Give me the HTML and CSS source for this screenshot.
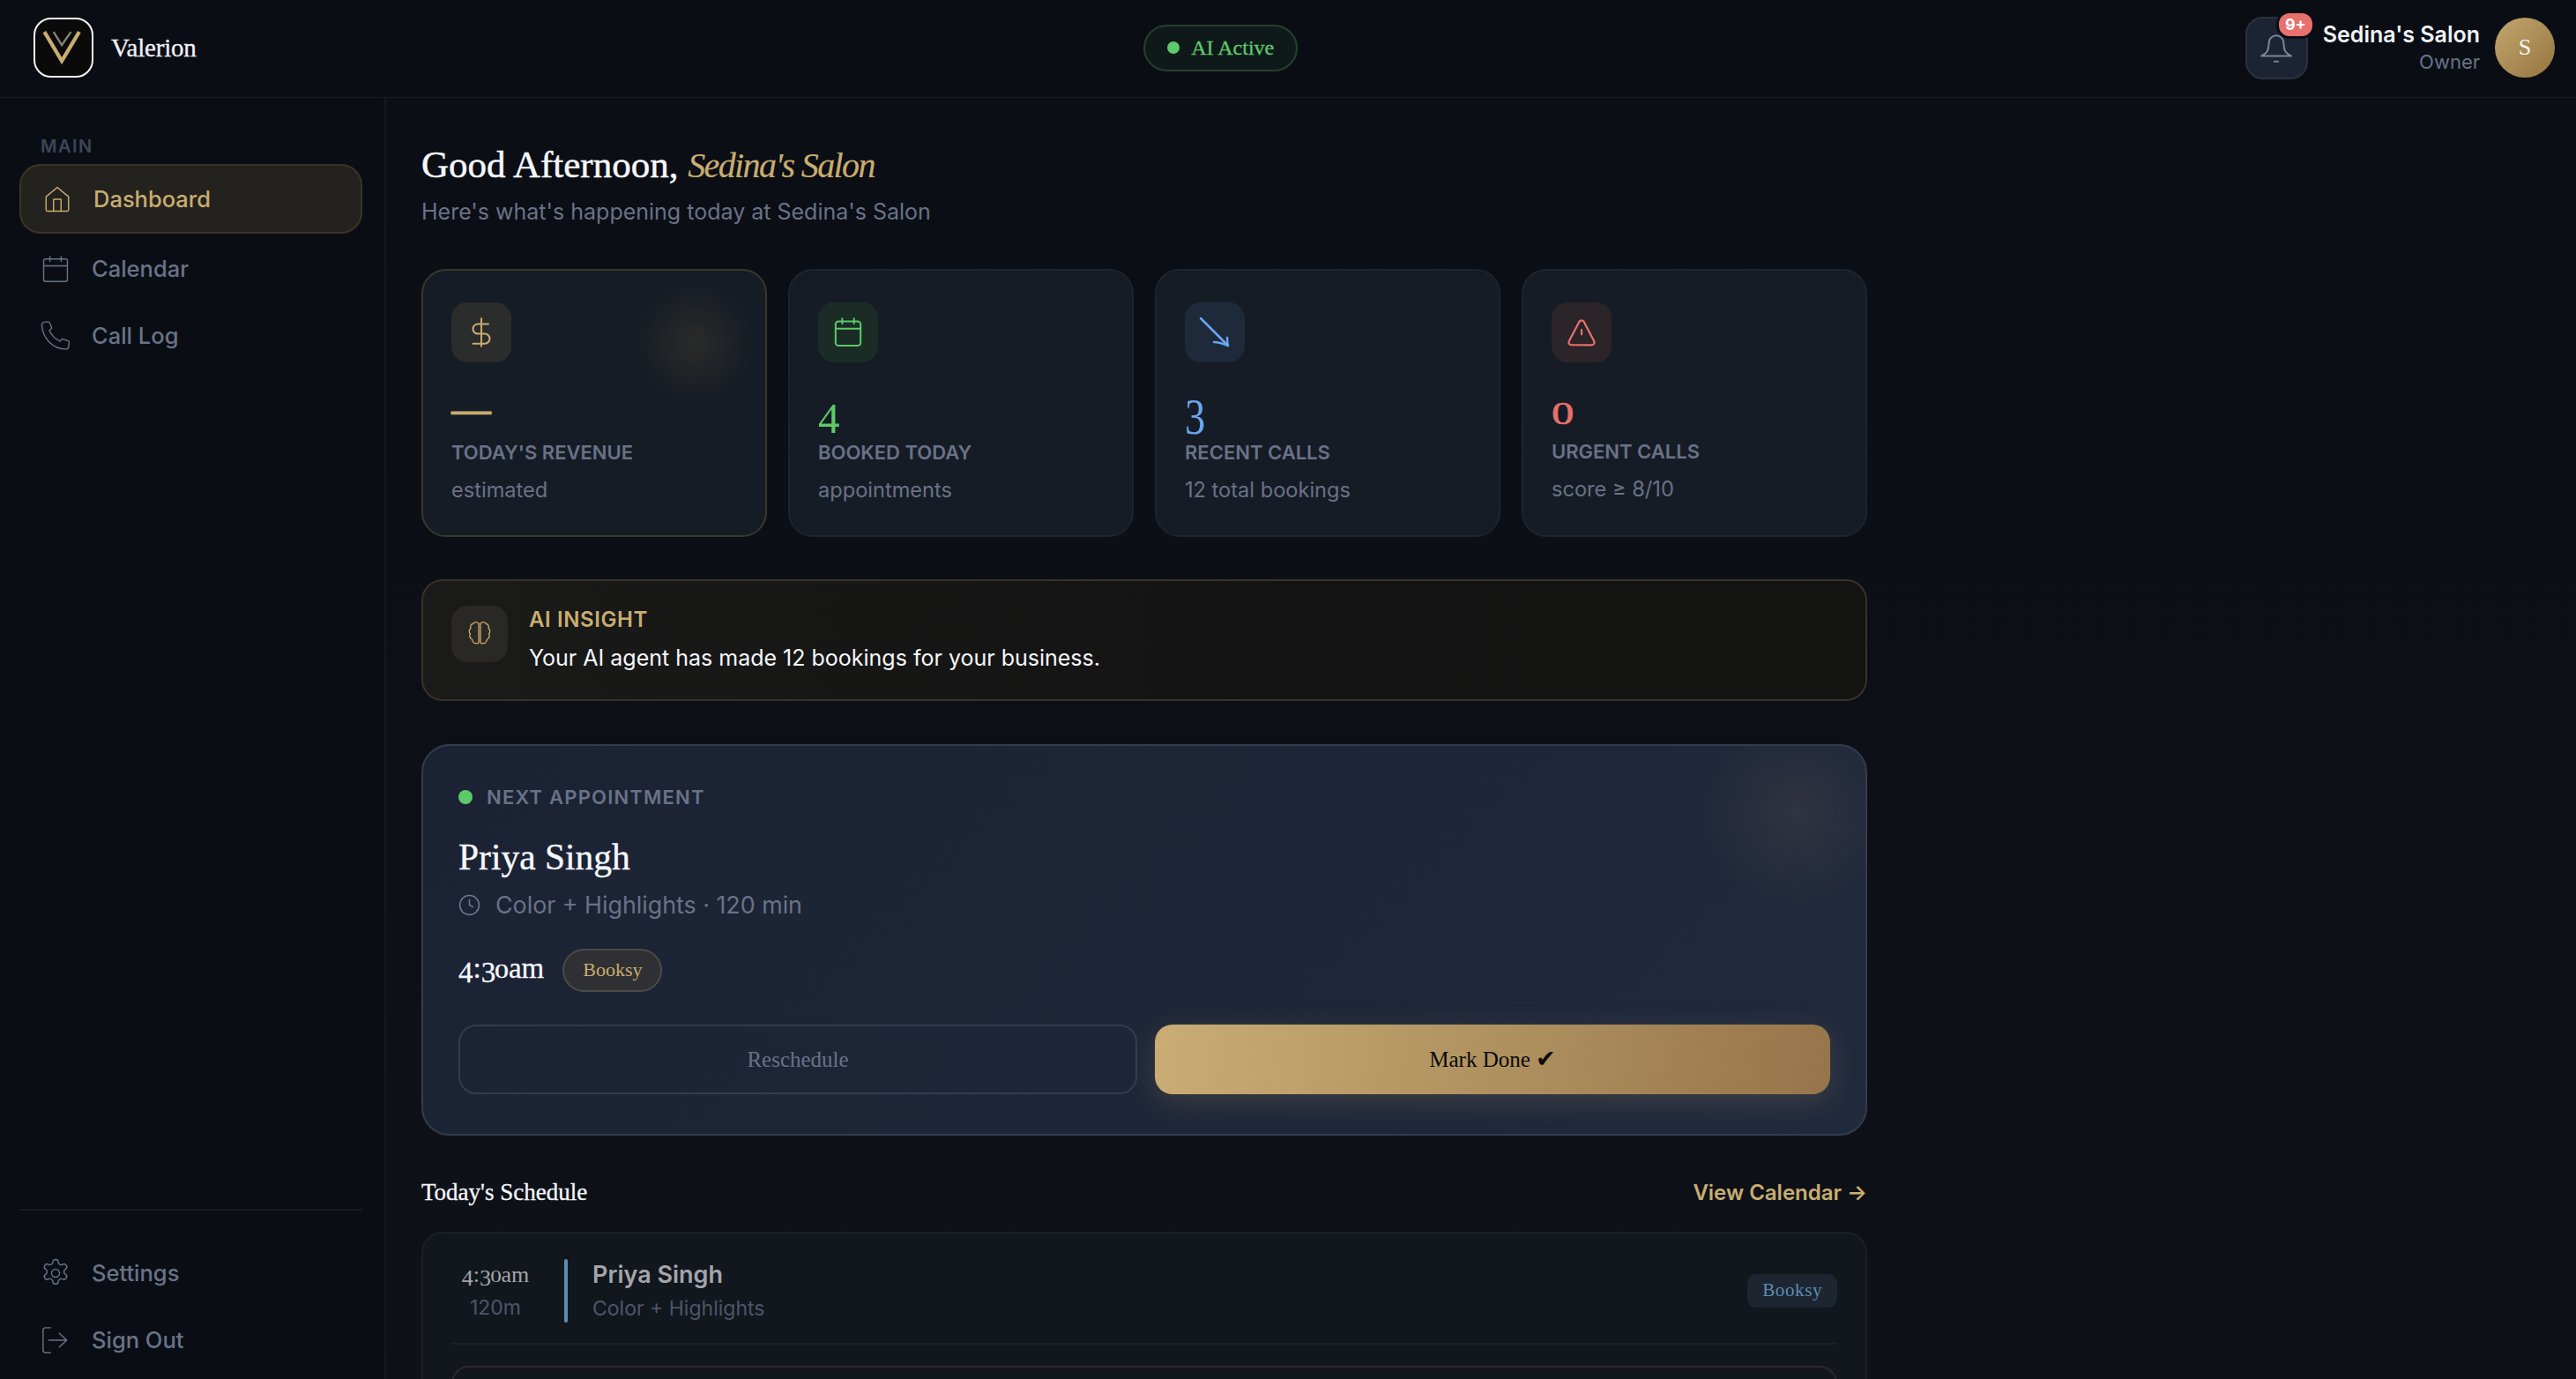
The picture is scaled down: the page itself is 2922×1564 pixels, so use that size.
FILE: index.html
```html
<!DOCTYPE html>
<html lang="en">
<head>
<meta charset="utf-8">
<title>Valerion</title>
<link rel="stylesheet" href="styles.css">
</head>
<body>
<div class="app">
  <header class="topbar">
    <div class="brand">
      <div class="logo">
        <svg viewBox="0 0 68 68" width="64" height="64"><path d="M22 15 L32 31 L43 15" fill="none" stroke="#85837c" stroke-width="2.5"/><path d="M11 15 L32 50 L53 15" fill="none" stroke="#c9ad70" stroke-width="4.5"/></svg>
      </div>
      <span class="brand-name">Valerion</span>
    </div>
    <div class="ai-pill"><span class="ai-dot"></span>AI Active</div>
    <div class="account">
      <div class="bell">
        <svg viewBox="0 0 36 36" width="38" height="38" fill="none" stroke="#7a849c" stroke-width="1.900" stroke-linecap="round" stroke-linejoin="round"><path d="M10 14c0-12 16-12 16 0 0 7 2 10 8 13H2c6-3 8-6 8-13z"/><path d="M16 33h4"/></svg>
        <span class="badge">9+</span>
      </div>
      <div class="who">
        <div class="who-name">Sedina's Salon</div>
        <div class="who-role">Owner</div>
      </div>
      <div class="avatar">S</div>
    </div>
  </header>
  <div class="shell">
    <aside class="sidebar">
      <div class="side-label">MAIN</div>
      <nav class="side-nav">
        <a class="nav-item active">
          <svg class="nav-ico" viewBox="0 0 24 24" fill="none" stroke="currentColor" stroke-linecap="round" stroke-linejoin="round"><path d="M3 10 12 2.500 21 10v10.500a1 1 0 0 1-1 1H4a1 1 0 0 1-1-1z"/><path d="M9 21.500V12h6v9.500"/></svg>
          Dashboard
        </a>
        <a class="nav-item">
          <svg class="nav-ico" viewBox="0 0 24 24" fill="none" stroke="currentColor" stroke-linecap="round" stroke-linejoin="round"><rect x="2.500" y="4" width="19" height="18" rx="1.500"/><path d="M7.500 2v4M16.500 2v4M2.500 9.500h19"/></svg>
          Calendar
        </a>
        <a class="nav-item">
          <svg class="nav-ico" viewBox="0 0 24 24" fill="none" stroke="currentColor" stroke-linecap="round" stroke-linejoin="round"><path d="M1 3c0-1 .8-1.800 2-2l3-.4c.6 0 1 .3 1.200.8L8.800 5c.2.500 0 1-.4 1.400L7 7.600c1.800 4 4.500 6.800 8.500 8.600l1.200-1.300c.4-.4.900-.6 1.400-.4l4 1.500c.6.200.9.700.8 1.300l-.4 3.200c-.2 1.200-1 2-2.200 2C10 22.500 1.500 14 1 3z"/></svg>
          Call Log
        </a>
      </nav>
      <div class="side-foot">
        <a class="nav-item">
          <svg class="nav-ico" viewBox="0 0 24 24" fill="none" stroke="currentColor" stroke-linecap="round" stroke-linejoin="round"><circle cx="12" cy="12" r="3.200"/><path d="M12.200 1h-.4a2 2 0 0 0-2 2v.2a2 2 0 0 1-1 1.700l-.4.200a2 2 0 0 1-2 0l-.2-.1a2 2 0 0 0-2.700.7l-.2.400a2 2 0 0 0 .7 2.700l.2.100a2 2 0 0 1 1 1.700v.5a2 2 0 0 1-1 1.700l-.2.100a2 2 0 0 0-.7 2.700l.2.400a2 2 0 0 0 2.700.7l.2-.1a2 2 0 0 1 2 0l.4.200a2 2 0 0 1 1 1.700v.2a2 2 0 0 0 2 2h.4a2 2 0 0 0 2-2v-.2a2 2 0 0 1 1-1.700l.4-.2a2 2 0 0 1 2 0l.2.100a2 2 0 0 0 2.700-.7l.2-.4a2 2 0 0 0-.7-2.700l-.2-.1a2 2 0 0 1-1-1.700v-.5a2 2 0 0 1 1-1.700l.2-.1a2 2 0 0 0 .7-2.700l-.2-.4a2 2 0 0 0-2.700-.7l-.2.100a2 2 0 0 1-2 0l-.4-.2a2 2 0 0 1-1-1.700V3a2 2 0 0 0-2-2z"/></svg>
          Settings
        </a>
        <a class="nav-item">
          <svg class="nav-ico" viewBox="0 0 24 24" fill="none" stroke="currentColor" stroke-linecap="round" stroke-linejoin="round"><path d="M8 22H4a2 2 0 0 1-2-2V4a2 2 0 0 1 2-2h4"/><path d="M15 6.500 21 12l-6 5.500M21 12H6.500"/></svg>
          Sign Out
        </a>
      </div>
    </aside>
    <main class="main">
      <div class="content">
        <h1 class="greet">Good Afternoon, <em>Sedina's Salon</em></h1>
        <p class="greet-sub">Here's what's happening today at Sedina's Salon</p>

        <section class="stats">
          <article class="stat stat-gold">
            <div class="stat-ico ico-gold"><svg viewBox="0 0 24 24" width="38" height="38" fill="none" stroke="currentColor" stroke-width="1.300" stroke-linecap="round" stroke-linejoin="round"><path d="M12 2v20M17 6H9.500a3.500 3.500 0 0 0 0 7h5a3.500 3.500 0 0 1 0 7H6"/></svg></div>
            <div class="stat-value val-gold"><span class="dash">—</span></div>
            <div class="stat-label">TODAY'S REVENUE</div>
            <div class="stat-sub">estimated</div>
          </article>
          <article class="stat">
            <div class="stat-ico ico-green"><svg viewBox="0 0 24 24" width="40" height="40" fill="none" stroke="currentColor" stroke-width="1.200" stroke-linecap="round" stroke-linejoin="round"><rect x="3.500" y="4.500" width="17" height="16.500" rx="2"/><path d="M8 2.500v3.500M16 2.500v3.500M3.500 9.500h17"/></svg></div>
            <div class="stat-value val-green"><span class="num">4</span></div>
            <div class="stat-label">BOOKED TODAY</div>
            <div class="stat-sub">appointments</div>
          </article>
          <article class="stat">
            <div class="stat-ico ico-blue"><svg viewBox="0 0 36 36" width="36" height="36" fill="none" stroke="currentColor" stroke-width="2.500" stroke-linecap="round" stroke-linejoin="round"><path d="M2 2 33 33"/><path d="M17 29c6 0 11 2 16 4 -1-3-1-6-1-9"/></svg></div>
            <div class="stat-value val-blue"><span class="num-three">3</span></div>
            <div class="stat-label">RECENT CALLS</div>
            <div class="stat-sub">12 total bookings</div>
          </article>
          <article class="stat">
            <div class="stat-ico ico-red"><svg viewBox="0 0 24 24" width="36" height="36" fill="none" stroke="currentColor" stroke-width="1.500" stroke-linecap="round" stroke-linejoin="round"><path d="M10.300 3.800 2.600 18.500a2 2 0 0 0 1.700 3h15.400a2 2 0 0 0 1.700-3L13.700 3.800a2 2 0 0 0-3.400 0z"/><path d="M12 10v3.500"/></svg></div>
            <div class="stat-value val-red"><span class="zero">0</span></div>
            <div class="stat-label">URGENT CALLS</div>
            <div class="stat-sub">score ≥ 8/10</div>
          </article>
        </section>

        <section class="insight">
          <div class="insight-ico"><svg viewBox="0 0 32 32" width="32" height="32" fill="none" stroke="#c9ad70" stroke-width="1.300" stroke-linecap="round" stroke-linejoin="round"><path d="M15 4C13 2 9.500 2 8.500 4.500 6 5 5 7.500 6 9.500 4 11 3.500 14 5.500 16 4 18.500 5 21 7.500 22 7.500 25 10.500 27.500 13 26.500 14 27 15 26.500 15 25Z"/><path d="M17 4C19 2 22.500 2 23.500 4.500 26 5 27 7.500 26 9.500 28 11 28.500 14 26.500 16 28 18.500 27 21 24.500 22 24.500 25 21.500 27.500 19 26.500 18 27 17 26.500 17 25Z"/></svg></div>
          <div class="insight-body">
            <div class="insight-title">AI INSIGHT</div>
            <div class="insight-text">Your AI agent has made 12 bookings for your business.</div>
          </div>
        </section>

        <section class="next">
          <div class="next-head"><span class="next-dot"></span>NEXT APPOINTMENT</div>
          <div class="next-name">Priya Singh</div>
          <div class="next-service">
            <svg viewBox="0 0 24 24" width="25" height="25" fill="none" stroke="#6f7890" stroke-width="1.500" stroke-linecap="round" stroke-linejoin="round"><circle cx="12" cy="12" r="10.500"/><path d="M12 6v6l4 2"/></svg>
            Color + Highlights · 120 min
          </div>
          <div class="next-time">
            <span class="time-big"><span class="d-low">4</span>:<span class="d-low">3</span><span class="d-x">0</span>am</span>
            <span class="source-pill">Booksy</span>
          </div>
          <div class="next-actions">
            <button class="btn btn-ghost">Reschedule</button>
            <button class="btn btn-gold">Mark Done <span class="tick">✔</span></button>
          </div>
        </section>

        <div class="sched-head">
          <h2 class="sched-title">Today's Schedule</h2>
          <a class="sched-link">View Calendar →</a>
        </div>
        <section class="sched">
          <div class="row">
            <div class="row-time">
              <div class="row-clock"><span class="d-low">4</span>:<span class="d-low">3</span><span class="d-x">0</span>am</div>
              <div class="row-dur">120m</div>
            </div>
            <div class="row-bar"></div>
            <div class="row-main">
              <div class="row-name">Priya Singh</div>
              <div class="row-svc">Color + Highlights</div>
            </div>
            <span class="row-tag">Booksy</span>
          </div>
          <div class="row-next"></div>
        </section>
      </div>
    </main>
  </div>
</div>
</body>
</html>
```

FILE: styles.css
```css
* { box-sizing: border-box; }
html, body { margin: 0; height: 100%; overflow: hidden; background: #0a0e14; }
body { font-family: "Inter", "Liberation Sans", sans-serif; color: #f0f2f8; }
h1, h2, p { margin: 0; }
svg { display: block; flex: none; }

.app { height: 100vh; display: flex; flex-direction: column; }

.topbar {
  height: 111px; flex: none; display: flex; justify-content: space-between;
  align-items: center; padding: 0 24px 2px 38px; background: #0a0e14;
  border-bottom: 1px solid #181b21;
}
.brand { display: flex; align-items: center; gap: 20px; }
.logo {
  width: 68px; height: 68px; border-radius: 20px; background: #0a0a0a; border: 2px solid #f4f4f2;
  display: flex; align-items: center; justify-content: center;
}
.brand-name { font-family: "Liberation Serif", serif; font-size: 29px; letter-spacing: -0.2px; color: #f0f2f8; -webkit-text-stroke: .3px #f0f2f8; }
.ai-pill {
  display: flex; align-items: center; gap: 13px; height: 53px; padding: 0 25px;
  border-radius: 27px; border: 2px solid #25402c; background: #10191a;
  font-family: "Liberation Serif", serif; font-size: 24px; color: #5cc96a; -webkit-text-stroke: .3px #5cc96a;
}
.ai-dot { width: 14px; height: 14px; border-radius: 50%; background: #5cc96a; }
.account { display: flex; align-items: center; justify-content: flex-end; }
.bell {
  width: 71px; height: 71px; border-radius: 20px; background: #1c2333; border: 2px solid #2b3140;
  display: flex; align-items: center; justify-content: center; position: relative;
}
.badge {
  position: absolute; top: -9px; right: -10px; height: 26px; padding: 0 7px; border-radius: 15px;
  background: #e8706c; border: 3px solid #0a0e14; box-sizing: content-box;
  font-size: 18px; font-weight: 700; line-height: 26px; color: #fff;
}
.who { margin-left: 17px; text-align: right; margin-top: -1px; }
.who-name { font-size: 25px; font-weight: 600; line-height: 30px; color: #f0f2f8; }
.who-role { font-size: 22px; line-height: 28px; color: #6a7287; margin-top: 2px; }
.avatar {
  width: 68px; height: 68px; margin-left: 17px; border-radius: 50%;
  background: linear-gradient(135deg, #c2a76f, #96743f);
  display: flex; align-items: center; justify-content: center;
  font-family: "Liberation Serif", serif; font-size: 26px; color: #f8f6f0;
}

.shell { flex: 1; min-height: 0; display: flex; }
.sidebar {
  width: 438px; flex: none; display: flex; flex-direction: column; padding: 43px 25px 0 22px;
  background: #0a0e14; border-right: 2px solid #15181f;
}
.side-label { padding-left: 24px; font-size: 20px; font-weight: 600; letter-spacing: 1.500px; line-height: 24px; color: #3f4558; margin-bottom: 8px; }
.side-nav { display: flex; flex-direction: column; gap: 3px; }
.nav-item {
  display: flex; align-items: center; gap: 24px; height: 73px; padding: 0 24px;
  font-size: 25.500px; font-weight: 500; color: #6a7287; border-radius: 24px;
}
.nav-item.active {
  height: 79px; color: #c9ad70; background: #24221f; border: 2px solid #3a3428;
}
.nav-ico { width: 34px; height: 34px; stroke-width: 1; }
.side-foot { margin-top: auto; border-top: 2px solid #181b21; padding: 34px 0 8px; display: flex; flex-direction: column; gap: 3px; }

.main { flex: 1; min-width: 0; padding: 0 40px; background: linear-gradient(180deg, #0b0e15, #0e1218); overflow: hidden; }
.content { width: 1640px; padding-top: 53px; }
.greet { font-family: "Liberation Serif", serif; font-size: 43px; font-weight: 400; line-height: 46px; color: #f6f7fb; -webkit-text-stroke: .5px #f6f7fb; }
.greet em { color: #c9ad70; font-size: 40px; letter-spacing: -1.600px; -webkit-text-stroke: .2px #c9ad70; }
.greet-sub { margin-top: 12px; font-size: 25px; line-height: 34px; color: #6a7287; }

.stats { display: grid; grid-template-columns: repeat(4, 392px); gap: 24px; margin-top: 48px; }
.stat {
  height: 304px; padding: 36px 32px 0; border-radius: 28px; background: #161c25; border: 2px solid #1e242e;
  position: relative; overflow: hidden;
}
.stat-gold { border-color: #3a372f; background: radial-gradient(circle 68px at 308px 82px, #2a2b2a, rgba(40,42,42,0) 100%), #161c25; }
.stat-ico { width: 68px; height: 68px; border-radius: 18px; display: flex; align-items: center; justify-content: center; }
.ico-gold { background: #2b2c2c; color: #c9ad70; }
.ico-green { background: #1b2c27; color: #5cc96a; }
.ico-blue { background: #1e2939; color: #69a5f2; }
.ico-red { background: #2b2429; color: #e8706c; }
.stat-value { height: 49px; margin-top: 39px; font-family: "Liberation Serif", serif; font-size: 49px; line-height: 49px; }
.val-gold { color: #c9ad70; }
.val-green { color: #5cc96a; }
.val-blue { color: #69a5f2; }
.val-red { color: #e8706c; }
.dash { display: block; font-size: 45px; font-weight: 700; line-height: 29px; -webkit-text-stroke: .6px #c9ad70; }
.num-three { display: block; width: fit-content; margin-top: 4px; font-size: 58px; line-height: 45px; transform: scaleX(.8); transform-origin: 0 0; }
.zero { display: block; width: fit-content; margin-top: -1px; font-size: 35px; line-height: 42px; transform: scaleX(1.450); transform-origin: 0 0; -webkit-text-stroke: .6px #e8706c; }
.stat-label { font-size: 22px; font-weight: 600; line-height: 28px; color: #6a7287; }
.stat-sub { margin-top: 14px; font-size: 23.600px; line-height: 30px; color: #6a7287; }

.insight {
  height: 138px; margin-top: 48px; display: flex; align-items: flex-start; gap: 24px; padding: 28px 32px 0;
  border-radius: 24px; border: 2px solid #37332a; background: linear-gradient(90deg, #1a1a19, #131313 60%, #131312);
}
.insight-ico { width: 64px; height: 64px; border-radius: 18px; background: #2a2824; display: flex; align-items: center; justify-content: center; }
.insight-title { font-size: 24px; font-weight: 600; line-height: 30px; letter-spacing: .6px; color: #c9ad70; margin-top: 1px; }
.insight-text { margin-top: 12px; font-size: 25px; line-height: 32px; color: #f6f7fb; }

.next {
  height: 444px; margin-top: 49px; padding: 43px 40px 0; border-radius: 32px; border: 2px solid #333c4f;
  background: radial-gradient(circle 110px at 1558px 76px, #303340, rgba(48,51,64,0) 100%), linear-gradient(135deg, #1a2233, #212a3d);
}
.next-head { display: flex; align-items: center; gap: 16px; font-size: 22px; font-weight: 600; line-height: 30px; letter-spacing: 1.200px; color: #6a7287; }
.next-dot { width: 16px; height: 16px; border-radius: 50%; background: #5cc96a; }
.next-name { margin-top: 28px; font-family: "Liberation Serif", serif; font-size: 41.500px; line-height: 50px; color: #f6f7fb; -webkit-text-stroke: .4px #f6f7fb; }
.next-service { margin-top: 11px; display: flex; align-items: center; gap: 17px; font-size: 26.800px; line-height: 36px; color: #6a7287; }
.next-time { margin-top: 30px; display: flex; align-items: center; gap: 21px; }
.time-big { font-family: "Liberation Serif", serif; font-size: 33px; line-height: 49px; color: #f6f7fb; -webkit-text-stroke: .3px #f6f7fb; }
.d-low { display: inline-block; transform: translateY(.16em); }
.d-x { display: inline-block; margin: 0 .07em 0 .05em; font-size: .72em; transform: scaleX(1.350); }
.source-pill {
  height: 49px; display: flex; align-items: center; padding: 0 21px; border-radius: 25px; border: 2px solid #4b4a47; background: #2f3033;
  font-family: "Liberation Serif", serif; font-size: 22px; color: #c9ad70;
}
.next-actions { display: grid; grid-template-columns: 770px 1fr; gap: 20px; margin-top: 36px; }
.btn { height: 79px; border-radius: 20px; font-family: "Liberation Serif", serif; font-size: 25px; cursor: pointer; }
.btn-ghost { background: transparent; border: 2px solid #333c4f; color: #6a7287; }
.btn-gold {
  border: 0; color: #0a0a0a; background: linear-gradient(100deg, #c9ad75, #96754a);
  box-shadow: 0 8px 32px rgba(201,169,110,.18);
}
.tick { font-family: "DejaVu Sans", sans-serif; font-size: 27px; line-height: 20px; }

.sched-head { display: flex; align-items: center; justify-content: space-between; margin-top: 46px; height: 36px; }
.sched-title { font-family: "Liberation Serif", serif; font-size: 27px; font-weight: 400; color: #f6f7fb; -webkit-text-stroke: .3px #f6f7fb; }
.sched-link { font-size: 24px; font-weight: 600; color: #c9ad70; }
.sched { margin-top: 27px; height: 300px; padding: 0 32px; border-radius: 24px; border: 2px solid #1b2028; background: #12171e; }
.row { height: 126px; padding-top: 5px; display: flex; align-items: center; border-bottom: 2px solid #1b2028; }
.row-time { width: 100px; text-align: center; }
.row-clock { font-family: "Liberation Serif", serif; font-size: 26px; line-height: 34px; color: #a3a5ab; }
.row-dur { font-size: 23px; line-height: 30px; color: #4f5567; margin-top: 3px; }
.row-bar { width: 4px; height: 72px; margin-left: 28px; border-radius: 2px; background: #5a8db5; }
.row-main { flex: 1; margin-left: 28px; }
.row-name { font-size: 27px; font-weight: 600; line-height: 36px; color: #a3a5ab; }
.row-svc { margin-top: 4px; font-size: 23px; line-height: 32px; color: #4f5567; }
.row-tag {
  height: 38px; padding: 0 17px; border-radius: 10px; background: #1d2630; display: flex; align-items: center;
  font-family: "Liberation Serif", serif; font-size: 21px; letter-spacing: .6px; color: #5a8db5;
}
.row-next { height: 80px; margin-top: 24px; border: 2px solid #2b2a28; border-radius: 20px; }
```
